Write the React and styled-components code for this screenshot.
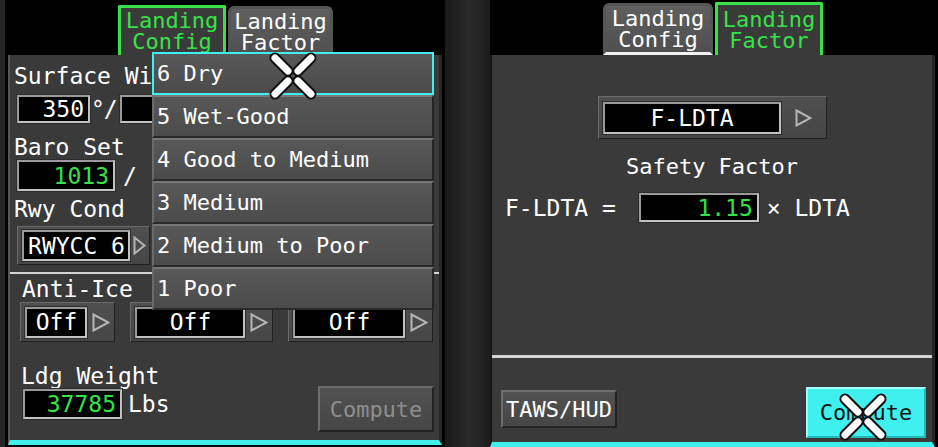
import React from 'react';
import styled, { createGlobalStyle, css } from 'styled-components';

const GREEN = '#36e247';
const CYAN = '#3ff0ee';
const PANEL = '#3a3a3a';

const GlobalStyle = createGlobalStyle`
  html, body {
    margin: 0;
    padding: 0;
    background: #000;
  }
  body {
    font-family: 'DejaVu Sans Mono', 'Liberation Mono', monospace;
  }
`;

const Screen = styled.div`
  display: flex;
  width: 938px;
  height: 447px;
  background: #000;
  color: #fff;
  font-size: 22px;
  overflow: hidden;
`;

const EdgeStrip = styled.div`
  width: 5px;
  flex-shrink: 0;
  background: #262626;
`;

const Bezel = styled.div`
  width: 45px;
  flex-shrink: 0;
  background: linear-gradient(90deg, #1a1a1a 0%, #2a2a2a 55%, #1c1c1c 100%);
`;

const Display = styled.section`
  position: relative;
  display: flex;
  flex-direction: column;
  flex-shrink: 0;
  box-sizing: border-box;
  width: ${(p) => p.$width}px;
  padding-left: ${(p) => p.$inset || 0}px;
  padding-right: ${(p) => p.$trail || 0}px;
`;

const TabBar = styled.div`
  display: flex;
  align-items: flex-end;
  gap: 2px;
  height: 55px;
  flex-shrink: 0;
  padding-left: ${(p) => p.$offset}px;
`;

const Tab = styled.div`
  box-sizing: border-box;
  width: ${(p) => p.$w}px;
  height: ${(p) => p.$h}px;
  padding-top: ${(p) => p.$pt ?? 2}px;
  text-align: center;
  font-size: 22px;
  line-height: 21px;
  overflow: hidden;
  border: 3px solid #555;
  border-bottom: none;
  border-radius: 6px 6px 0 0;
  background: linear-gradient(#5f5f5f, #4f4f4f);
  color: #fff;
  ${(p) =>
    p.$active &&
    css`
      border-color: ${GREEN};
      border-radius: 2px 2px 0 0;
      background: ${PANEL};
      color: ${GREEN};
    `}
  ${(p) =>
    p.$underline &&
    css`
      border-bottom: 3px solid #f2f2f2;
    `}
`;

const Body = styled.div`
  flex: 1;
  min-height: 0;
  display: flex;
  flex-direction: column;
  background: ${PANEL};
  border-left: 2px solid ${(p) => p.$edge || '#575757'};
  border-right: 3px solid #262626;
  border-bottom: 5px solid ${CYAN};
  margin-bottom: ${(p) => p.$gap || 0}px;
`;

const Section = styled.div`
  display: flex;
  flex-direction: column;
  align-items: ${(p) => p.$align || 'flex-start'};
  padding: ${(p) => p.$pad || '0'};
`;

const Label = styled.div`
  height: 26px;
  font-size: 23px;
  line-height: 26px;
  white-space: nowrap;
  margin-top: ${(p) => p.$mt || 0}px;
  margin-left: ${(p) => p.$ml || 0}px;
`;

const Title = styled(Label)`
  font-size: 22px;
  align-self: center;
`;

const Row = styled.div`
  display: flex;
  align-items: center;
  gap: ${(p) => p.$gap || 0}px;
  margin-top: ${(p) => p.$mt || 0}px;
  margin-left: ${(p) => p.$ml || 0}px;
`;

const Unit = styled.span`
  font-size: 23px;
  line-height: 26px;
  white-space: nowrap;
  margin-left: ${(p) => p.$ml || 0}px;
  letter-spacing: ${(p) => p.$ls || 0}px;
`;

const ValueBox = styled.div`
  box-sizing: border-box;
  display: flex;
  align-items: center;
  justify-content: ${(p) => (p.$center ? 'center' : 'flex-end')};
  width: ${(p) => p.$w}px;
  height: ${(p) => p.$h}px;
  padding: 0 4px 0 5px;
  margin-left: ${(p) => p.$ml || 0}px;
  background: #000;
  border: 2px solid #c2c2c2;
  border-top-color: #9a9a9a;
  border-left-color: #9a9a9a;
  box-shadow: 0 0 0 1px #2c2c2c;
  color: ${(p) => (p.$green ? GREEN : '#fff')};
  font-size: 23px;
  white-space: nowrap;
  overflow: hidden;
`;

const DropButton = styled.div`
  box-sizing: border-box;
  display: flex;
  align-items: center;
  width: ${(p) => p.$w}px;
  height: ${(p) => p.$h}px;
  padding-left: ${(p) => p.$pl || 4}px;
  margin-top: ${(p) => p.$mt || 0}px;
  background: linear-gradient(#4f4f4f, #464646);
  border: 1px solid;
  border-color: #6a6a6a #202020 #202020 #6a6a6a;
`;

const ArrowSlot = styled.div`
  flex: 1;
  display: flex;
  justify-content: center;
  align-items: center;
`;

const Divider = styled.div`
  height: ${(p) => p.$h || 2}px;
  margin-top: ${(p) => p.$mt || 0}px;
  background: #d4d4d4;
  flex-shrink: 0;
`;

const Spacer = styled.div`
  flex: 1;
`;

const Footer = styled.div`
  display: flex;
  justify-content: space-between;
  align-items: flex-start;
  height: ${(p) => p.$h}px;
  margin-top: ${(p) => p.$mt || 0}px;
  padding: ${(p) => p.$pad || 0};
  flex-shrink: 0;
`;

const Column = styled.div`
  display: flex;
  flex-direction: column;
  align-items: flex-start;
`;

const Button = styled.div`
  box-sizing: border-box;
  display: flex;
  align-items: center;
  justify-content: center;
  width: ${(p) => p.$w}px;
  height: ${(p) => p.$h}px;
  margin-top: ${(p) => p.$mt || 0}px;
  font-size: 22px;
  color: #fff;
  background: linear-gradient(#515151, #464646);
  border: 2px solid;
  border-color: #6e6e6e #222 #222 #6e6e6e;
  ${(p) =>
    p.$variant === 'disabled' &&
    css`
      color: #8e8e8e;
    `}
  ${(p) =>
    p.$variant === 'active' &&
    css`
      color: #141414;
      background: ${CYAN};
      border-color: #a6fbfb #22b8b8 #22b8b8 #a6fbfb;
    `}
`;

const OptionList = styled.div`
  position: absolute;
  left: 147px;
  top: 52px;
  width: 282px;
  display: flex;
  flex-direction: column;
  z-index: 2;
`;

const Option = styled.div`
  box-sizing: border-box;
  display: flex;
  align-items: center;
  height: 43px;
  padding-left: 3px;
  font-size: 22px;
  background: linear-gradient(#585858, #4b4b4b);
  border: 2px solid;
  border-color: #777 #262626 #2a2a2a #6a6a6a;
  white-space: nowrap;
  ${(p) =>
    p.$selected &&
    css`
      border-color: ${CYAN};
    `}
`;

const CursorMark = styled.svg`
  position: absolute;
  left: ${(p) => p.$x}px;
  top: ${(p) => p.$y}px;
  z-index: 3;
  pointer-events: none;
`;

const Formula = styled.div`
  display: flex;
  align-items: center;
  margin-top: 13px;
  padding-left: 13px;
  font-size: 23px;
`;

const Triangle = ({ w = 16, h = 18 }) => (
  <svg width={w} height={h} viewBox={`0 0 ${w} ${h}`}>
    <path
      d={`M1.5 1.5 L${w - 1.5} ${h / 2} L1.5 ${h - 1.5} Z`}
      fill="none"
      stroke="#b5b5b5"
      strokeWidth="2"
    />
  </svg>
);

// four arms of the touch cursor, from the outer corner towards the centre
const arms = [
  [7, 7, 20, 20],
  [43, 7, 30, 20],
  [7, 43, 20, 30],
  [43, 43, 30, 30],
];

const Cursor = ({ x, y }) => (
  <CursorMark $x={x} $y={y} width="50" height="50" viewBox="0 0 50 50">
    {arms.map(([x1, y1, x2, y2], i) => (
      <line key={`o${i}`} x1={x1} y1={y1} x2={x2} y2={y2} stroke="#111" strokeWidth="11" strokeLinecap="round" />
    ))}
    {arms.map(([x1, y1, x2, y2], i) => (
      <line key={`i${i}`} x1={x1} y1={y1} x2={x2} y2={y2} stroke="#fff" strokeWidth="7" strokeLinecap="round" />
    ))}
  </CursorMark>
);

const Select = ({ w, h, boxW, boxH, value, mt, tri }) => (
  <DropButton $w={w} $h={h} $mt={mt}>
    <ValueBox $w={boxW} $h={boxH} $center>
      {value}
    </ValueBox>
    <ArrowSlot>
      <Triangle {...tri} />
    </ArrowSlot>
  </DropButton>
);

const conditions = [
  '6 Dry',
  '5 Wet-Good',
  '4 Good to Medium',
  '3 Medium',
  '2 Medium to Poor',
  '1 Poor',
];

export default function App() {
  return (
    <>
      <GlobalStyle />
      <Screen>
        <EdgeStrip />

        <Display $width={440} $inset={3} $trail={3}>
          <TabBar $offset={110}>
            <Tab $active $w={108} $h={50}>
              Landing
              <br />
              Config
            </Tab>
            <Tab $w={105} $h={49}>
              Landing
              <br />
              Factor
            </Tab>
          </TabBar>

          <Body $gap={2}>
            <Section $pad="8px 0 0 7px">
              <Label $ml={-3}>Surface Wind</Label>
              <Row $mt={6} $gap={1}>
                <ValueBox $w={73} $h={28}>350</ValueBox>
                <Unit $ls={-1}>°/</Unit>
                <ValueBox $w={60} $h={28} $ml={2} />
              </Row>
              <Label $mt={11} $ml={-3}>Baro Set</Label>
              <Row $gap={8}>
                <ValueBox $w={98} $h={31} $green>1013</ValueBox>
                <Unit>/</Unit>
              </Row>
              <Label $mt={5} $ml={-3}>Rwy Cond</Label>
              <Select mt={4} w={133} h={39} boxW={108} boxH={31} value="RWYCC 6" tri={{ w: 13, h: 19 }} />
            </Section>

            <Divider $mt={7} />

            <Section $pad="2px 5px 0 10px">
              <Label $ml={2}>Anti-Ice</Label>
              <Row $gap={15}>
                <Select w={95} h={40} boxW={62} boxH={31} value="Off" tri={{ w: 18, h: 19 }} />
                <Select w={143} h={40} boxW={110} boxH={31} value="Off" tri={{ w: 18, h: 19 }} />
                <Select w={145} h={40} boxW={112} boxH={31} value="Off" tri={{ w: 18, h: 19 }} />
              </Row>
            </Section>

            <Footer $mt={21} $h={70} $pad="0 5px 0 10px">
              <Column>
                <Label $ml={1}>Ldg Weight</Label>
                <Row $gap={6}>
                  <ValueBox $w={99} $h={30} $ml={3} $green>37785</ValueBox>
                  <Unit>Lbs</Unit>
                </Row>
              </Column>
              <Button $w={116} $h={46} $mt={23} $variant="disabled">
                Compute
              </Button>
            </Footer>
          </Body>

          <OptionList>
            {conditions.map((c, i) => (
              <Option key={c} $selected={i === 0}>
                {c}
              </Option>
            ))}
          </OptionList>
          <Cursor x={263} y={51} />
        </Display>

        <Bezel />

        <Display $width={448} $trail={3}>
          <TabBar $offset={113}>
            <Tab $underline $w={110} $h={52}>
              Landing
              <br />
              Config
            </Tab>
            <Tab $active $w={108} $h={53} $pt={4}>
              Landing
              <br />
              Factor
            </Tab>
          </TabBar>

          <Body $edge="#161616">
            <Section $align="center" $pad="41px 0 0 0">
              <Select w={229} h={43} boxW={178} boxH={32} value="F-LDTA" tri={{ w: 17, h: 18 }} />
            </Section>
            <Title $mt={15}>Safety Factor</Title>
            <Formula>
              <span>F-LDTA =</span>
              <ValueBox $w={120} $h={29} $ml={23} $green>1.15</ValueBox>
              <Unit $ml={8}>× LDTA</Unit>
            </Formula>
            <Spacer />
            <Divider $h={3} />
            <Footer $h={84} $pad="0 6px 0 9px">
              <Button $w={116} $h={38} $mt={32}>
                TAWS/HUD
              </Button>
              <Button $w={120} $h={51} $mt={29} $variant="active">
                Compute
              </Button>
            </Footer>
          </Body>
          <Cursor x={348} y={392} />
        </Display>
      </Screen>
    </>
  );
}
